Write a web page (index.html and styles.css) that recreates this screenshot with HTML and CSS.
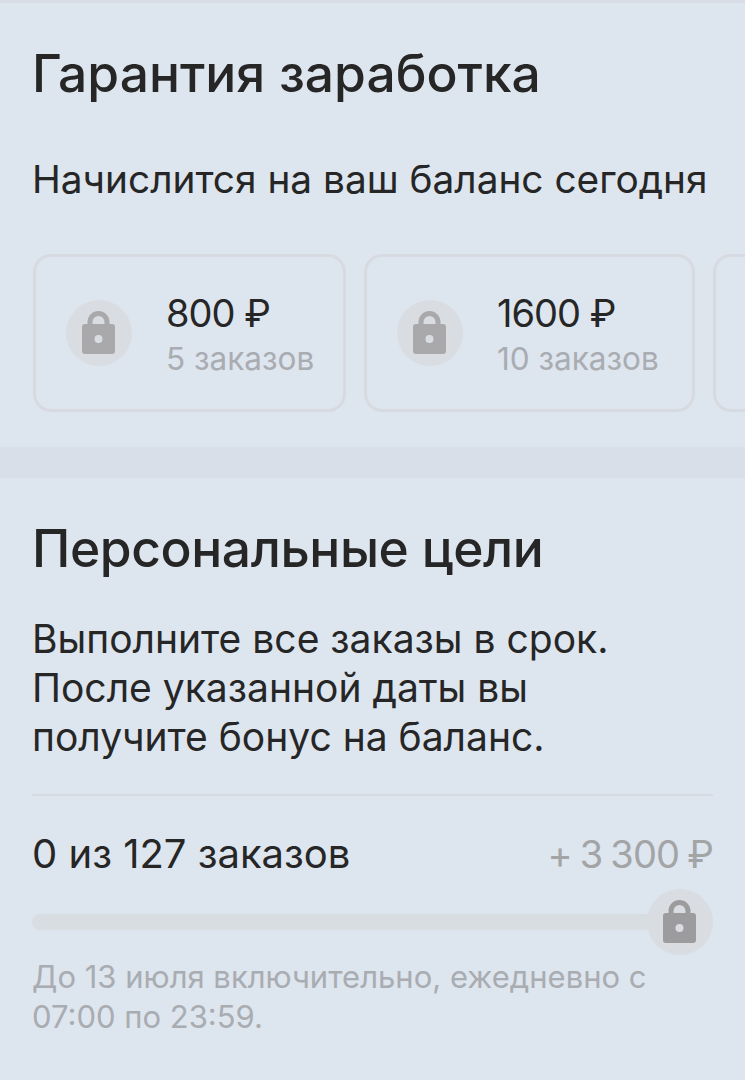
FILE: index.html
```html
<!DOCTYPE html>
<html lang="ru">
<head>
  <meta charset="UTF-8" />
  <title>Гарантия заработка</title>
  <link rel="stylesheet" href="styles.css">
</head>
<body>
  <svg width="0" height="0" class="defs">
    <symbol id="lock" viewBox="0 0 66 66">
      <path d="M24 26v-4a8.5 8.5 0 0 1 17 0v4" fill="none" stroke="currentColor" stroke-width="5"/>
      <path fill-rule="evenodd" fill="currentColor" d="M19 24h27a3 3 0 0 1 3 3v24a3 3 0 0 1-3 3H19a3 3 0 0 1-3-3V27a3 3 0 0 1 3-3zm13.5 11a4 4 0 1 0 0 8 4 4 0 0 0 0-8z"/>
    </symbol>
  </svg>

  <section class="section section-first">
    <h2 class="heading">Гарантия заработка</h2>
    <p class="lead">Начислится на ваш баланс сегодня</p>
    <div class="cards">
      <div class="card card-small">
        <div class="lock-circle"><svg class="lock"><use href="#lock"/></svg></div>
        <div class="card-text">
          <div class="card-sum">800 ₽</div>
          <div class="card-note">5 заказов</div>
        </div>
      </div>
      <div class="card">
        <div class="lock-circle"><svg class="lock"><use href="#lock"/></svg></div>
        <div class="card-text">
          <div class="card-sum">1600 ₽</div>
          <div class="card-note">10 заказов</div>
        </div>
      </div>
      <div class="card"></div>
    </div>
  </section>

  <section class="section section-second">
    <h2 class="heading">Персональные цели</h2>
    <p class="text">Выполните все заказы в срок.<br>После указанной даты вы<br>получите бонус на баланс.</p>
    <div class="divider"></div>
    <div class="goal-row">
      <span>0 из 127 заказов</span>
      <span class="goal-bonus">+ 3 300 ₽</span>
    </div>
    <div class="progress">
      <div class="progress-bar"></div>
      <div class="lock-circle progress-lock"><svg class="lock"><use href="#lock"/></svg></div>
    </div>
    <p class="terms">До 13 июля включительно, ежедневно с<br>07:00 по 23:59.</p>
  </section>
</body>
</html>
```

FILE: styles.css
```css
* {
  box-sizing: border-box;
}
html, body {
  margin: 0;
  padding: 0;
  height: 100%;
  overflow: hidden;
}
body {
  background-color: #dde5ee;
  color: #262626;
  font-family: Inter, sans-serif;
}
.defs {
  display: block;
  height: 0;
}
.section {
  padding: 0 32px;
}
.section-first {
  height: 447px;
  padding-top: 40px;
  border-top: 3px solid #d8dde6;
  overflow: hidden;
}
.section-second {
  padding-top: 40px;
  border-top: 31px solid #d9dfe8;
}
.heading {
  margin: 0;
  font-size: 51.5px;
  line-height: 60px;
  font-weight: 550;
}
.section-second .heading {
  letter-spacing: -0.4px;
}
.lead {
  margin: 52px 0 0;
  font-size: 38.8px;
  line-height: 48px;
}
.cards {
  display: flex;
  gap: 18px;
  margin: 51px -32px 0 1px;
}
.card {
  flex: 0 0 313px;
  height: 158px;
  display: flex;
  align-items: center;
  gap: 34px;
  padding-left: 30px;
  border: 3px solid #d7dbe1;
  border-radius: 18px;
}
.card + .card {
  flex-basis: 331px;
}
.card-text {
  padding-top: 5px;
}
.lock-circle {
  flex: none;
  width: 66px;
  height: 66px;
  border-radius: 50%;
  background-color: #d9dde2;
  color: #a9a9ab;
}
.lock {
  display: block;
  width: 66px;
  height: 66px;
}
.card-sum {
  font-size: 38px;
  line-height: 46px;
  letter-spacing: -1px;
}
.card-note {
  font-size: 31.5px;
  line-height: 46px;
  color: #a9acb1;
}
.text {
  margin: 36px 0 0;
  font-size: 39px;
  line-height: 49px;
}
.divider {
  height: 2px;
  margin-top: 33px;
  background-color: #d6dbe2;
}
.goal-row {
  display: flex;
  justify-content: space-between;
  margin-top: 34px;
  font-size: 40px;
  line-height: 48px;
}
.goal-bonus {
  color: #a3a4a6;
  font-size: 38px;
  letter-spacing: -0.8px;
  word-spacing: -2px;
}
.progress {
  position: relative;
  display: flex;
  align-items: center;
  justify-content: flex-end;
  height: 66px;
  margin-top: 11px;
}
.progress-bar {
  position: absolute;
  left: 0;
  right: 0;
  height: 16px;
  border-radius: 8px;
  background-color: #d8dde2;
}
.progress-lock {
  position: relative;
  color: #9c9b9d;
}
.terms {
  margin: 2px 0 0;
  font-size: 31px;
  line-height: 40px;
  color: #a9acb1;
}
```
